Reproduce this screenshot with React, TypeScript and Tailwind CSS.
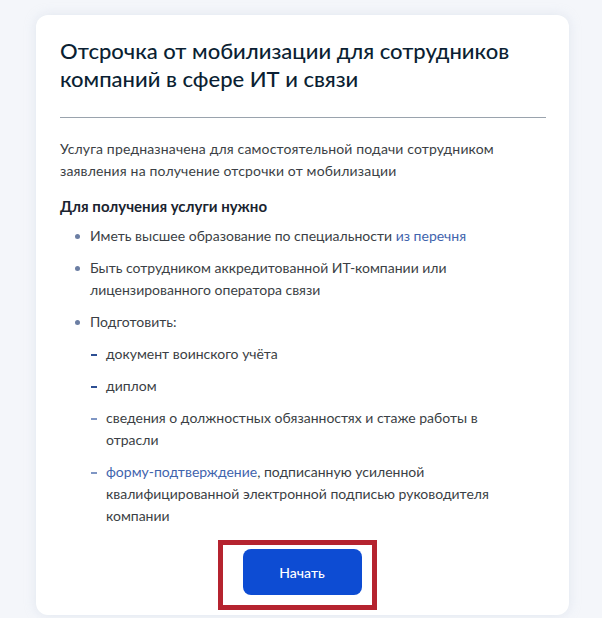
const items = [
	{ text: 'документ воинского учёта', strong: true },
	{ text: 'диплом', strong: true },
	{ text: 'сведения о должностных обязанностях и стаже работы в отрасли' }
];

function Bullet({ children }: { children: React.ReactNode }) {
	return (
		<li className="flex gap-[10px]">
			<span className="mt-[9px] size-[5px] shrink-0 rounded-full bg-[#6b7ea3]" />
			<div>{children}</div>
		</li>
	);
}

function Dash({ strong, children }: { strong?: boolean; children: React.ReactNode }) {
	return (
		<li className="flex gap-[9px]">
			<span className={`mt-[11px] h-[2px] w-[6px] shrink-0 ${strong ? 'bg-[#2d4f93]' : 'bg-[#7f96c4]'}`} />
			<div className="max-w-[410px]">{children}</div>
		</li>
	);
}

export default function App() {
	return (
		<div
			className="h-[618px] w-[602px] overflow-hidden bg-[#f4f6fa] pt-[15px] pl-[36px] pr-[33px]"
			style={{ fontFamily: 'Lato, "Open Sans", sans-serif' }}
		>
			<div className="h-[600px] rounded-[12px] bg-white pl-[24px] pr-[23px] pt-[22px] shadow-[0_0_12px_rgba(190,200,220,0.35)]">
				<h1 className="text-[22px] leading-[28px] font-medium text-[#0b1f33]">
					Отсрочка от мобилизации для сотрудников компаний в сфере ИТ и связи
				</h1>
				<div className="mt-[24px] h-px bg-[#9aa3ad]" />
				<p className="mt-[20px] text-[14px] leading-[22px] tracking-[0.15px] text-[#3b3f45]">
					Услуга предназначена для самостоятельной подачи сотрудником заявления на получение отсрочки от мобилизации
				</p>
				<h2 className="mt-[13px] text-[15px] leading-[22px] font-bold text-[#1b2430]">
					Для получения услуги нужно
				</h2>
				<ul className="mt-[8px] ml-[15px] flex flex-col gap-[10px] text-[14px] leading-[22px] text-[#3b3f45]">
					<Bullet>
						Иметь высшее образование по специальности{' '}
						<span className="text-[#3f64ad]">из перечня</span>
					</Bullet>
					<Bullet>Быть сотрудником аккредитованной ИТ-компании или лицензированного оператора связи</Bullet>
					<Bullet>Подготовить:</Bullet>
				</ul>
				<ul className="mt-[10px] ml-[31px] flex flex-col gap-[10px] text-[14px] leading-[22px] text-[#3b3f45]">
					{items.map((item) => (
						<Dash key={item.text} strong={item.strong}>
							{item.text}
						</Dash>
					))}
					<Dash>
						<span className="text-[#3f64ad]">форму-подтверждение</span>, подписанную усиленной
						квалифицированной электронной подписью руководителя компании
					</Dash>
				</ul>
				<div className="mt-[13px] flex justify-center">
					<div className="ml-[-12px] border-[5px] border-[#b5232f] pl-[20px] pr-[10px] pt-[4px] pb-[10px]">
						<button className="h-[46px] w-[119px] rounded-[8px] bg-[#0d4cd3] text-[14px] font-medium text-white">
							Начать
						</button>
					</div>
				</div>
			</div>
		</div>
	);
}
